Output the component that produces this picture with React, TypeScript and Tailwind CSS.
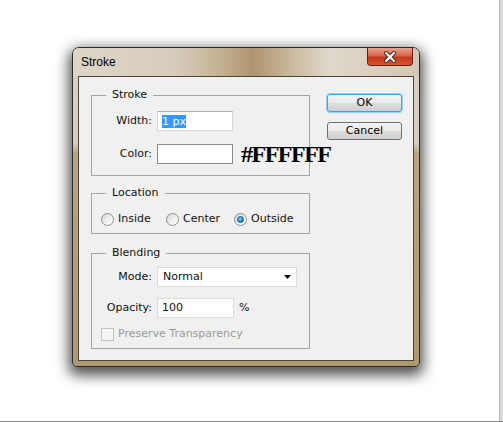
import React from "react";

const Radio = ({ label, checked, className }: { label: string; checked?: boolean; className?: string }) => {
  return (
    <div className={"flex items-center gap-[4px] " + (className ?? "")}>
      <div className="w-[13px] h-[13px] rounded-full border border-[#8e8f8f] bg-[linear-gradient(135deg,#d2d2d2_0%,#f4f4f4_60%,#ffffff_100%)] flex items-center justify-center">
        {checked && (
          <div className="w-[7px] h-[7px] rounded-full border border-[#1a4f80] bg-[radial-gradient(circle_at_40%_35%,#8fe0ff_0%,#2c9ee6_45%,#0b5aa6_100%)]" />
        )}
      </div>
      <span>{label}</span>
    </div>
  );
};

const Group = ({ title, className, children }: { title: string; className?: string; children: React.ReactNode }) => {
  return (
    <fieldset className={"min-w-0 w-full border border-[#a3a3a3] " + (className ?? "")}>
      <legend className="ml-[14px] px-[6px] leading-[14px]">{title}</legend>
      {children}
    </fieldset>
  );
};

const Field = ({ label, children }: { label: string; children: React.ReactNode }) => (
  <div className="flex items-center h-[20px]">
    <span className="w-[65px] shrink-0 text-right pr-[5px]">{label}</span>
    {children}
  </div>
);

export default function App() {
  return (
    <div className="w-[503px] h-[422px] bg-white flex flex-col overflow-hidden font-['DejaVu_Sans',sans-serif] text-[11px] text-[#111]">
      <div className="flex flex-1">
        <div className="flex-1 pl-[72px] pt-[47px]">
          {/* window */}
          <div className="w-[348px] h-[320px] flex flex-col rounded-t-[7px] rounded-b-[4px] border border-[#2b2b2b] bg-[linear-gradient(180deg,#d9d1c4_0%,#d6cdbf_30%,#b8a480_33%,#ae9873_100%)] shadow-[0_5px_14px_3px_rgba(0,0,0,0.7)]">
            <div className="h-[28px] flex justify-between rounded-t-[6px] bg-[linear-gradient(90deg,#ddd5c8_0%,#d6ccbb_30%,#c2ae8d_44%,#ad9470_52%,#c6b597_62%,#e0d8cc_74%,#d2c6b3_100%)]">
              <span className="pl-[8px] pt-[7px] leading-[14px] font-['Liberation_Sans',sans-serif] text-[12px] text-black">
                Stroke
              </span>
              <div className="mr-[6px] w-[46px] h-[18px] rounded-b-[4px] border border-t-0 border-[#5e2219] bg-[linear-gradient(180deg,#e9a38f_0%,#d8664c_45%,#c2381d_55%,#d9552e_100%)] flex items-center justify-center">
                <svg width="14" height="12" viewBox="0 0 14 12">
                  <path d="M3 2 L11 10 M11 2 L3 10" stroke="#4a2a22" strokeWidth="4.2" strokeLinecap="round" />
                  <path d="M3 2 L11 10 M11 2 L3 10" stroke="#ffffff" strokeWidth="2.2" strokeLinecap="round" />
                </svg>
              </div>
            </div>
            {/* client */}
            <div className="flex-1 mx-[5px] mb-[5px] border border-[#4b4538] bg-[#f0f0f0] flex pl-[12px] pt-[11px]">
              <div className="w-[219px] shrink-0 flex flex-col">
                <Group title="Stroke">
                  <div className="pt-[9px] pb-[11px] flex flex-col gap-[13px]">
                    <Field label="Width:">
                      <div className="w-[76px] shrink-0 h-[20px] bg-white border border-[#d6d6d6] border-t-[#b0b0b0] flex items-center pl-[4px]">
                        <span className="bg-[#3399ff] text-white leading-[13px]">1 px</span>
                      </div>
                    </Field>
                    <Field label="Color:">
                      <div className="w-[76px] shrink-0 h-[20px] bg-white border border-[#8c8c8c]" />
                      <span className="ml-[8px] shrink-0 font-['Liberation_Serif',serif] font-bold text-[24px] leading-[20px] tracking-[-1.5px] text-black whitespace-nowrap">
                        #FFFFFF
                      </span>
                    </Field>
                  </div>
                </Group>
                <Group title="Location" className="mt-[10px]">
                  <div className="pt-[12px] pb-[7px] pl-[9px] flex h-[33px] items-start">
                    <div className="flex h-[14px] items-center">
                      <Radio label="Inside" className="w-[65px]" />
                      <Radio label="Center" className="w-[68px]" />
                      <Radio label="Outside" checked />
                    </div>
                  </div>
                </Group>
                <Group title="Blending" className="mt-[12px]">
                  <div className="pt-[7px] pb-[7px] flex flex-col">
                    <Field label="Mode:">
                      <div className="w-[140px] h-[20px] bg-white border border-[#dadada] flex items-center justify-between pl-[5px] pr-[5px]">
                        <span>Normal</span>
                        <svg width="7" height="4" viewBox="0 0 7 4">
                          <path d="M0 0 H7 L3.5 4 Z" fill="#000" />
                        </svg>
                      </div>
                    </Field>
                    <div className="mt-[11px]">
                      <Field label="Opacity:">
                        <div className="w-[77px] h-[20px] bg-white border border-[#dadada] flex items-center pl-[4px]">
                          100
                        </div>
                        <span className="ml-[5px]">%</span>
                      </Field>
                    </div>
                    <div className="mt-[10px] h-[13px] flex items-center gap-[4px] pl-[9px] text-[#9a9a9a]">
                      <div className="w-[13px] h-[13px] border border-[#c4c4c4] bg-[#f4f4f4]" />
                      <span>Preserve Transparency</span>
                    </div>
                  </div>
                </Group>
              </div>
              <div className="ml-[17px] pt-[6px] flex flex-col gap-[10px]">
                <button className="w-[75px] h-[18px] rounded-[3px] border border-[#3aa6dc] shadow-[0_0_0_1px_#8fd6f5] bg-[linear-gradient(180deg,#f2f2f2_0%,#ebebeb_50%,#dddddd_50%,#cfcfcf_100%)] leading-[16px] text-black">
                  OK
                </button>
                <button className="w-[75px] h-[18px] rounded-[3px] border border-[#707070] bg-[linear-gradient(180deg,#f2f2f2_0%,#ebebeb_50%,#dddddd_50%,#cfcfcf_100%)] leading-[16px] text-black">
                  Cancel
                </button>
              </div>
            </div>
          </div>
        </div>
        <div className="w-[4px] bg-[#dadada] border-l border-[#b8b8b8]" />
      </div>
      <div className="h-[1px] bg-[#8a8a8a]" />
    </div>
  );
}
